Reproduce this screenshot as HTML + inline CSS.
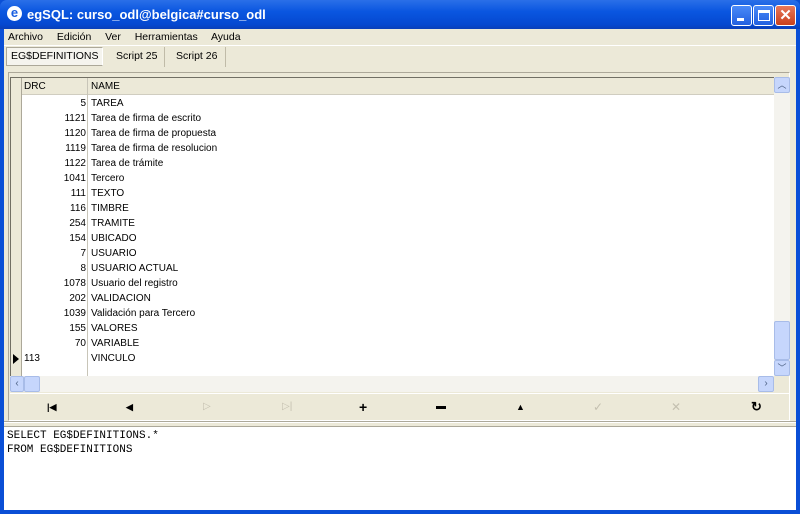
<!DOCTYPE html>
<html><head><style>
*{margin:0;padding:0;box-sizing:border-box}
body{width:800px;height:514px;overflow:hidden;background:#0a4fd6;font-family:"Liberation Sans",sans-serif;font-size:11px;position:relative}
.abs{position:absolute}
#title{left:0;top:0;width:800px;height:29px;background:linear-gradient(#2a6fe8,#0a56e0 40%,#0548d0 85%,#0a3fb8);border-radius:7px 7px 0 0;color:#fff;font-weight:bold;font-size:13px}
#client{left:4px;top:29px;width:792px;height:481px;background:#ece9d8}
.btn{top:5px;width:21px;height:21px;border:1px solid #fff;border-radius:3px;background:linear-gradient(#4a8af8,#2260e0)}
.row{position:absolute;left:0;height:15px;line-height:15px;width:760px;font-size:10px}
.row .d{position:absolute;left:13px;width:62px;text-align:right}
.row .n{position:absolute;left:80px}
.nav{position:absolute;top:8px;font-size:12px;font-weight:bold}
</style></head><body>
<div id="title" class="abs">
 <div class="abs" style="left:7px;top:6px;width:15px;height:15px;border-radius:50%;background:#fff;color:#1a5fe0;font-size:13px;line-height:14px;text-align:center">e</div>
 <div class="abs" style="left:27px;top:7px">egSQL: curso_odl@belgica#curso_odl</div>
 <div class="abs btn" style="left:731px"><div class="abs" style="left:5px;top:12px;width:7px;height:3px;background:#fff"></div></div>
 <div class="abs btn" style="left:753px"><div class="abs" style="left:4px;top:4px;width:12px;height:11px;border:1px solid #fff;border-top-width:3px"></div></div>
 <div class="abs btn" style="left:775px;background:linear-gradient(#e8785a,#c8401c);color:#fff;font-size:15px;text-align:center;line-height:19px">✕</div>
</div>
<div id="client" class="abs">
 <div class="abs" style="left:4px;top:1px;font-size:10.5px;line-height:14px;word-spacing:4px">Archivo&nbsp; Edición&nbsp; Ver&nbsp; Herramientas&nbsp; Ayuda</div>
 <div class="abs" style="left:0;top:16px;width:792px;border-top:1px solid #fff"></div>
 <div class="abs" style="left:2px;top:18px;width:97px;height:19px;background:#f5f4ee;border:1px solid #aca899;border-right-color:#fff;line-height:17px;padding-left:4px;font-size:10.5px">EG$DEFINITIONS</div>
 <div class="abs" style="left:112px;top:21px;font-size:10.5px">Script 25</div>
 <div class="abs" style="left:160px;top:18px;width:1px;height:20px;background:#c0bba8"></div>
 <div class="abs" style="left:172px;top:21px;font-size:10.5px">Script 26</div>
 <div class="abs" style="left:221px;top:18px;width:1px;height:20px;background:#c0bba8"></div>
 <div class="abs" style="left:4px;top:43px;width:782px;height:349px;border:1px solid #aca899;border-right-color:#fff;border-bottom-color:#fff"></div>
 <div class="abs" style="left:6px;top:48px;width:764px;height:299px;background:#fff;border-top:1px solid #716f64;border-left:1px solid #716f64;overflow:hidden">
  <div class="abs" style="left:0;top:0;width:764px;height:17px;background:#ece9d8;border-bottom:1px solid #d0cdc0"></div>
  <div class="abs" style="left:0;top:0;width:11px;height:299px;background:#ece9d8;border-right:1px solid #aca899"></div>
  <div class="abs" style="left:76px;top:0;width:1px;height:299px;background:#c8c5b8"></div>
  <div class="abs" style="left:13px;top:3px;font-size:10px">DRC</div>
  <div class="abs" style="left:80px;top:3px;font-size:10px">NAME</div>
  <div class="abs" style="left:0;top:18px;width:764px">
   <div class="row" style="top:0"><span class="d">5</span><span class="n">TAREA</span></div>
   <div class="row" style="top:15px"><span class="d">1121</span><span class="n">Tarea de firma de escrito</span></div>
   <div class="row" style="top:30px"><span class="d">1120</span><span class="n">Tarea de firma de propuesta</span></div>
   <div class="row" style="top:45px"><span class="d">1119</span><span class="n">Tarea de firma de resolucion</span></div>
   <div class="row" style="top:60px"><span class="d">1122</span><span class="n">Tarea de trámite</span></div>
   <div class="row" style="top:75px"><span class="d">1041</span><span class="n">Tercero</span></div>
   <div class="row" style="top:90px"><span class="d">111</span><span class="n">TEXTO</span></div>
   <div class="row" style="top:105px"><span class="d">116</span><span class="n">TIMBRE</span></div>
   <div class="row" style="top:120px"><span class="d">254</span><span class="n">TRAMITE</span></div>
   <div class="row" style="top:135px"><span class="d">154</span><span class="n">UBICADO</span></div>
   <div class="row" style="top:150px"><span class="d">7</span><span class="n">USUARIO</span></div>
   <div class="row" style="top:165px"><span class="d">8</span><span class="n">USUARIO ACTUAL</span></div>
   <div class="row" style="top:180px"><span class="d">1078</span><span class="n">Usuario del registro</span></div>
   <div class="row" style="top:195px"><span class="d">202</span><span class="n">VALIDACION</span></div>
   <div class="row" style="top:210px"><span class="d">1039</span><span class="n">Validación para Tercero</span></div>
   <div class="row" style="top:225px"><span class="d">155</span><span class="n">VALORES</span></div>
   <div class="row" style="top:240px"><span class="d">70</span><span class="n">VARIABLE</span></div>
   <div class="row" style="top:255px"><span class="abs" style="left:2px;top:3px;width:0;height:0;border-left:6px solid #000;border-top:5px solid transparent;border-bottom:5px solid transparent"></span><span class="abs" style="left:13px">113</span><span class="n">VINCULO</span></div>
  </div>
 </div>
 <div class="abs" style="left:770px;top:48px;width:16px;height:299px;background:#f4f3ee">
  <div class="abs" style="left:0;top:0;width:16px;height:16px;background:#c6d6fc;border:1px solid #a8bce8;border-radius:2px;color:#4d6185;text-align:center;font-size:9px;line-height:14px">︿</div>
  <div class="abs" style="left:0;top:244px;width:16px;height:39px;background:#c6d6fc;border:1px solid #a8bce8;border-radius:2px"></div>
  <div class="abs" style="left:0;top:283px;width:16px;height:16px;background:#c6d6fc;border:1px solid #a8bce8;border-radius:2px;color:#4d6185;text-align:center;font-size:9px;line-height:14px">﹀</div>
 </div>
 <div class="abs" style="left:6px;top:347px;width:764px;height:16px;background:#f4f3ee">
  <div class="abs" style="left:0;top:0;width:14px;height:16px;background:#c6d6fc;border:1px solid #a8bce8;border-radius:2px;color:#4d6185;font-size:10px;line-height:14px;text-align:center">‹</div>
  <div class="abs" style="left:14px;top:0;width:16px;height:16px;background:#c6d6fc;border:1px solid #a8bce8;border-radius:2px"></div>
  <div class="abs" style="left:748px;top:0;width:16px;height:16px;background:#c6d6fc;border:1px solid #a8bce8;border-radius:2px;color:#4d6185;font-size:10px;line-height:14px;text-align:center">›</div>
 </div>
 <div class="abs" style="left:6px;top:364px;width:780px;height:26px;border-top:1px solid #fff">
  <div class="nav" style="left:37px;font-size:9px;top:8px">|◀</div>
  <div class="nav" style="left:116px;font-size:9px;top:8px">◀</div>
  <div class="nav" style="left:193px;font-size:10px;color:#c4c0b0;font-weight:normal;top:7px">▷</div>
  <div class="nav" style="left:272px;font-size:10px;color:#c4c0b0;font-weight:normal;top:7px">▷|</div>
  <div class="nav" style="left:349px;top:5px;font-size:14px">+</div>
  <div class="abs" style="left:426px;top:12px;width:10px;height:3px;background:#000"></div>
  <div class="nav" style="left:506px;font-size:9px;top:8px">▲</div>
  <div class="nav" style="left:583px;color:#c4c0b0;font-weight:normal;top:6px">✓</div>
  <div class="nav" style="left:661px;color:#c4c0b0;font-weight:normal;top:6px">✕</div>
  <div class="nav" style="left:741px;top:5px;font-size:13px">↻</div>
 </div>
 <div class="abs" style="left:0;top:392px;width:792px;height:2px;background:#aca899;border-bottom:1px solid #fff"></div>
 <div class="abs" style="left:0;top:397px;width:792px;height:84px;background:#fff;border-top:1px solid #aca899;font-family:'Liberation Mono',monospace;font-size:11px;line-height:14px;padding:2px 0 0 3px">SELECT EG$DEFINITIONS.*<br>FROM EG$DEFINITIONS</div>
</div>
</body></html>
